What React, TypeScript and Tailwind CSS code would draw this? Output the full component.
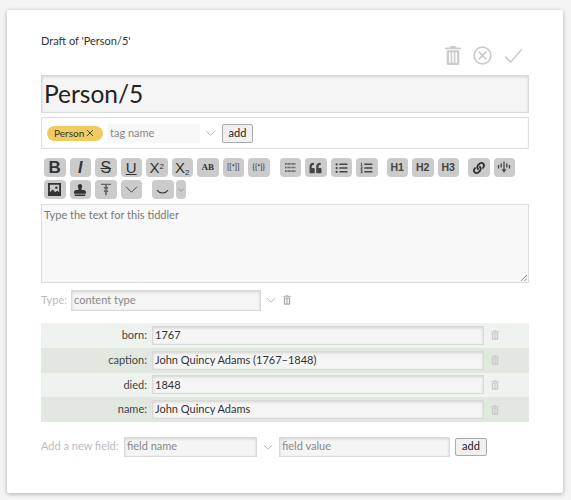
import React from 'react';
import { FaLink, FaListOl, FaListUl, FaQuoteLeft, FaStamp } from 'react-icons/fa';

const font = "font-['Lato','Noto_Sans',sans-serif]";

const Trash = ({ className }: { className: string }) => (
  <svg viewBox="0 0 20 24" className={className} fill="currentColor">
    <path d="M7 0h6l1 2h5a1 1 0 0 1 1 1v1H0V3a1 1 0 0 1 1-1h5z" />
    <path d="M2 5.500h16V22a2 2 0 0 1-2 2H4a2 2 0 0 1-2-2zM5 8v13h2V8zm4 0v13h2V8zm4 0v13h2V8z" fillRule="evenodd" />
  </svg>
);

const Chevron = ({ className }: { className: string }) => (
  <svg viewBox="0 0 16 9" className={className} fill="none" stroke="currentColor" strokeWidth="1.1">
    <path d="M1 1l7 7 7-7" />
  </svg>
);

const Tool = ({ children, className = '' }: { children: React.ReactNode; className?: string }) => (
  <div className={`w-[21.5px] h-[19px] rounded-[4px] bg-[#cbcbcb] flex items-center justify-center text-[#333] shrink-0 ${className}`}>
    {children}
  </div>
);

const Sans = ({ children, className = '' }: { children: React.ReactNode; className?: string }) => (
  <span className={`font-['Liberation_Sans',sans-serif] leading-none ${className}`}>{children}</span>
);

const inputClass =
  'bg-[#f5f5f5] border border-[#d9d9d9] shadow-[inset_0_1px_3px_rgba(0,0,0,0.15)] flex items-center';

const fields = [
  { name: 'born', value: '1767', bg: 'bg-[#eef3ef]' },
  { name: 'caption', value: 'John Quincy Adams (1767–1848)', bg: 'bg-[#e0e8e0]' },
  { name: 'died', value: '1848', bg: 'bg-[#eef3ef]' },
  { name: 'name', value: 'John Quincy Adams', bg: 'bg-[#e0e8e0]' },
];

const App: React.FC = () => {
  return (
    <div className={`h-[500px] bg-[#f4f4f4] pt-[10px] px-[7px] ${font} text-[#333] overflow-hidden`}>
      <div className="w-[556px] h-[483px] bg-white rounded-[2px] shadow-[0_1px_4px_rgba(0,0,0,0.3)] pt-[23px] pl-[34px] pr-[34px]">
        {/* Header */}
        <div className="text-[11px] leading-[16px] h-[16px]">Draft of 'Person/5'</div>
        <div className="flex justify-end items-center gap-[12px] h-[22px] -mt-[5px] pr-[6px] text-[#cccccc]">
          <Trash className="w-[16px] h-[19px]" />
          <svg viewBox="0 0 20 20" className="w-[19px] h-[19px]" fill="none" stroke="currentColor" strokeWidth="1.8">
            <circle cx="10" cy="10" r="8.800" />
            <path d="M6 6l8 8M14 6l-8 8" />
          </svg>
          <svg viewBox="0 0 20 16" className="w-[19px] h-[15px]" fill="none" stroke="currentColor" strokeWidth="1.6">
            <path d="M1 9l6 6L19 1" />
          </svg>
        </div>

        {/* Title */}
        <div className={`${inputClass} h-[38px] mt-[9px] px-[2px] text-[24.5px] text-[#222]`}>Person/5</div>

        {/* Tags */}
        <div className="h-[32px] mt-[4px] border border-[#e0e0e0] shadow-[inset_0_0_2px_rgba(0,0,0,0.08)] flex items-center pl-[5px]">
          <div className="h-[15px] w-[56px] rounded-full bg-[#f0cb60] flex items-center pl-[7px] text-[10px] text-[#333] gap-[2px]">
            Person
            <svg viewBox="0 0 8 8" className="w-[8px] h-[8px]" fill="none" stroke="#333" strokeWidth="0.9">
              <path d="M1 1l6 6M7 1l-6 6" />
            </svg>
          </div>
          <div className="w-[92px] h-[19px] ml-[5px] bg-[#f8f8f8] flex items-center px-[2px] text-[11px] text-[#888]">tag name</div>
          <Chevron className="w-[11px] h-[6px] ml-[5px] text-[#999]" />
          <div className="ml-[6px] w-[31px] h-[19px] bg-[#f0f0f0] border border-[#aaa] rounded-[2px] flex items-center justify-center text-[11px] text-[#222]">add</div>
        </div>

        {/* Toolbar */}
        <div className="mt-[9px] pl-[3px]">
          <div className="flex gap-[4px] h-[19px]">
            <Tool><Sans className="font-bold text-[17px]">B</Sans></Tool>
            <Tool><Sans className="italic font-bold text-[16px]">I</Sans></Tool>
            <Tool><Sans className="text-[16px] line-through">S</Sans></Tool>
            <Tool><Sans className="text-[15px] underline">U</Sans></Tool>
            <Tool><Sans className="text-[15px]">X<sup className="text-[8px]">2</sup></Sans></Tool>
            <Tool><Sans className="text-[15px]">X<sub className="text-[8px]">2</sub></Sans></Tool>
            <Tool><span className="font-['Liberation_Serif',serif] font-bold text-[9px]">AB</span></Tool>
            <Tool><span className="text-[7.5px] font-medium">[[*]]</span></Tool>
            <Tool><span className="text-[7.5px] font-medium">{'{{*}}'}</span></Tool>
            <Tool className="ml-[6px]">
              <svg viewBox="0 0 12 10" className="w-[11px] h-[9px]" fill="none" stroke="#555" strokeWidth="1.800" strokeDasharray="1 0.500">
                <path d="M0 1h12M0 5h12M0 9h12" />
              </svg>
            </Tool>
            <Tool><FaQuoteLeft className="w-[13px] h-[12px] text-[#444]" /></Tool>
            <Tool><FaListUl className="w-[13px] h-[12px] text-[#444]" /></Tool>
            <Tool><FaListOl className="w-[13px] h-[12px] text-[#444]" /></Tool>
            <Tool className="ml-[5px]"><Sans className="font-bold text-[10.5px] text-[#444]">H1</Sans></Tool>
            <Tool><Sans className="font-bold text-[10.5px] text-[#444]">H2</Sans></Tool>
            <Tool><Sans className="font-bold text-[10.5px] text-[#444]">H3</Sans></Tool>
            <Tool className="ml-[5px]"><FaLink className="w-[12px] h-[12px] text-[#333]" /></Tool>
            <Tool>
              <svg viewBox="0 0 16 14" className="w-[14px] h-[13px]" fill="#444">
                <path d="M7.300 0h1.400v9h2L8 13 5.300 9h2zM1 4h1.500v4H1zM4 2.500h1.500V7H4zM10.500 2.500H12V7h-1.500zM13.500 4H15v4h-1.500z" />
              </svg>
            </Tool>
          </div>
          <div className="flex gap-[4px] h-[19px] mt-[3px]">
            <Tool>
              <svg viewBox="0 0 14 14" className="w-[13px] h-[13px]" fill="#333">
                <path fillRule="evenodd" d="M0 0h14v14H0zM2 2v8l3-3 3 3 2-2 2 2V2z" />
                <circle cx="9" cy="5" r="1.300" />
              </svg>
            </Tool>
            <Tool><FaStamp className="w-[12px] h-[12px] text-[#333]" /></Tool>
            <Tool>
              <svg viewBox="0 0 12 14" className="w-[10px] h-[13px]" fill="#666">
                <path d="M0 0h12v1.500H0zM5 1.500h2V14H5zM3.500 4h5v2h-5zM3.500 8h5v2h-5z" />
              </svg>
            </Tool>
            <Tool><Chevron className="w-[13px] h-[7px] text-[#333]" /></Tool>
            <Tool className="ml-[6px]">
              <svg viewBox="0 0 14 6" className="w-[13px] h-[6px] mt-[5px]" fill="none" stroke="#333" strokeWidth="1.100">
                <path d="M1 1c3 4 9 4 12 0" />
              </svg>
            </Tool>
            <div className="w-[10px] h-[19px] -ml-[2px] rounded-[4px] bg-[#cbcbcb] flex items-center justify-center">
              <Chevron className="w-[6px] h-[4px] text-[#444]" />
            </div>
          </div>
        </div>

        {/* Body */}
        <div className="h-[79px] mt-[5px] bg-[#f8f8f8] border border-[#dcdcdc] relative px-[2px] py-[2px] text-[11px] leading-[16px] text-[#777]">
          Type the text for this tiddler
          <svg viewBox="0 0 8 8" className="absolute right-[1px] bottom-[1px] w-[7px] h-[7px]" fill="none" stroke="#555" strokeWidth="0.8">
            <path d="M1 8l7-7M5 8l3-3" />
          </svg>
        </div>

        {/* Type */}
        <div className="flex items-center h-[22px] mt-[6px] text-[11px]">
          <span className="w-[30px] text-[#bbb]">Type:</span>
          <div className={`${inputClass} w-[190px] h-[21px] px-[2px] text-[#888]`}>content type</div>
          <Chevron className="w-[10px] h-[6px] ml-[5px] text-[#999]" />
          <Trash className="w-[8px] h-[10px] ml-[7px] text-[#aaa]" />
        </div>

        {/* Fields */}
        <div className="mt-[12px]">
          {fields.map((f) => (
            <div key={f.name} className={`${f.bg} flex items-center h-[24.75px] text-[11px]`}>
              <span className="w-[111px] text-right pr-[5px] text-[#444]">{f.name}:</span>
              <div className={`${inputClass} w-[332px] h-[19px] px-[2px] text-[#333]`}>{f.value}</div>
              <Trash className="w-[8px] h-[10px] ml-[7px] text-[#c8c8c8]" />
            </div>
          ))}
        </div>

        {/* New field */}
        <div className="flex items-center h-[21px] mt-[14px] text-[11px]">
          <span className="w-[83px] whitespace-nowrap text-[#bbb]">Add a new field:</span>
          <div className={`${inputClass} w-[133px] h-[20px] px-[2px] text-[#888]`}>field name</div>
          <Chevron className="w-[10px] h-[6px] ml-[6px] text-[#999]" />
          <div className={`${inputClass} w-[171px] h-[20px] ml-[6px] px-[2px] text-[#888]`}>field value</div>
          <div className="ml-[5px] w-[32px] h-[18px] bg-[#f0f0f0] border border-[#aaa] rounded-[2px] flex items-center justify-center text-[#222]">add</div>
        </div>
      </div>
    </div>
  );
};

export default App;
